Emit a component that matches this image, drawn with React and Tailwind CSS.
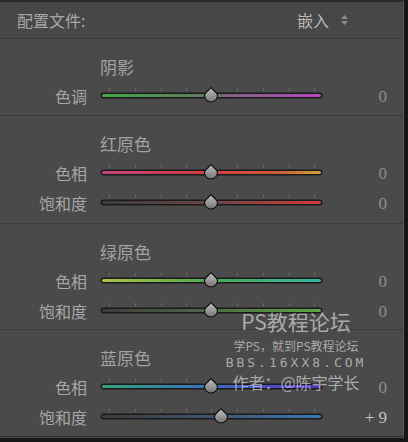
import React from "react";

const CJK = { fontFamily: '"Noto Sans CJK SC", "Noto Sans", sans-serif' };
const SERIF = { fontFamily: '"Liberation Serif", "DejaVu Serif", serif' };

const TICKS = [9, 35, 61, 86, 111, 137, 163, 189, 214];

function Slider({ id, stops, value = 0 }) {
  const cx = 111 + value * 1.11;
  return (
    <svg width="223" height="30" viewBox="0 0 223 30" className="block">
      <defs>
        <linearGradient id={`g-${id}`} x1="0" y1="0" x2="1" y2="0">
          {stops.map(([o, c], i) => (
            <stop key={i} offset={o} stopColor={c} />
          ))}
        </linearGradient>
        <linearGradient id={`t-${id}`} x1="0" y1="0" x2="0" y2="1">
          <stop offset="0" stopColor="#c4c4c4" />
          <stop offset="1" stopColor="#747474" />
        </linearGradient>
      </defs>
      {TICKS.map((x) => (
        <rect key={x} x={x} y="7" width="1" height="3" fill="#6c6c6c" />
      ))}
      <rect x="0.5" y="11.5" width="222" height="6" rx="3" fill="#1b1b1b" />
      <rect x="2" y="13" width="219" height="3" rx="1.5" fill={`url(#g-${id})`} />
      <path
        d={`M${cx},6.5 C${cx + 2},9.5 ${cx + 6.5},11.5 ${cx + 6.5},14.5 A6.5 6.5 0 1 1 ${cx - 6.5},14.5 C${cx - 6.5},11.5 ${cx - 2},9.5 ${cx},6.5 Z`}
        fill={`url(#t-${id})`}
        stroke="#111"
        strokeWidth="1.2"
      />
    </svg>
  );
}

function Row({ label, id, stops, value = 0 }) {
  const text = value > 0 ? `+ ${value}` : `${value}`;
  return (
    <div className="flex h-[30px] shrink-0 items-center">
      <div className="w-[87px] text-right text-[16px] leading-none text-[#a6a6a6]" style={CJK}>
        {label}
      </div>
      <div className="ml-[13px]">
        <Slider id={id} stops={stops} value={value} />
      </div>
      <div
        className={`w-[64px] text-right text-[17px] leading-none ${value ? "text-[#c4c4c4]" : "text-[#8e8e8e]"}`}
        style={SERIF}
      >
        {text}
      </div>
    </div>
  );
}

function Section({ title, children, pb }) {
  return (
    <div className={`shrink-0 border-t border-[#3a3a3a] pt-[18px] ${pb}`}>
      <div className="h-[20px] pl-[100px] text-[17px] leading-[20px] text-[#a2a2a2]" style={CJK}>
        {title}
      </div>
      <div className="mt-[4px]">{children}</div>
    </div>
  );
}

export default function App() {
  return (
    <div className="relative flex h-[442px] w-[408px] flex-col bg-[#161616]">
      <div className="flex h-[437px] w-[404px] shrink-0 flex-col overflow-hidden border-t-2 border-r border-b border-[#2c2c2c] border-r-[#5a5a5a] border-b-[#2a2a2a] bg-[#4a4a4a]">
        {/* profile header */}
        <div className="flex h-[36px] shrink-0 items-center bg-[#474747] pl-[17px] pr-[55px]">
          <span className="flex-1 text-[16px] leading-none text-[#a8a8a8]" style={CJK}>
            配置文件:
          </span>
          <span className="text-[16px] leading-none text-[#b8b8b8]" style={CJK}>
            嵌入
          </span>
          <svg width="7" height="10" viewBox="0 0 7 10" className="ml-[12px]">
            <path d="M3.5 0 L7 4 L0 4 Z" fill="#8a8a8a" />
            <path d="M3.5 10 L7 6 L0 6 Z" fill="#8a8a8a" />
          </svg>
        </div>

        <Section title="阴影" pb="pb-[4px]">
          <Row
            label="色调"
            id="sh"
            stops={[
              [0, "#43a845"],
              [0.45, "#5f7c5f"],
              [0.55, "#7d647d"],
              [1, "#b548c0"],
            ]}
          />
        </Section>

        <Section title="红原色" pb="pb-[5px]">
          <Row
            label="色相"
            id="rh"
            stops={[
              [0, "#c2407e"],
              [0.5, "#d0403e"],
              [0.8, "#d05a3a"],
              [1, "#c8a432"],
            ]}
          />
          <Row
            label="饱和度"
            id="rs"
            stops={[
              [0, "#3c3c3c"],
              [0.5, "#6a4646"],
              [1, "#d43a3a"],
            ]}
          />
        </Section>

        <Section title="绿原色" pb="pb-[3px]">
          <Row
            label="色相"
            id="gh"
            stops={[
              [0, "#b0c444"],
              [0.5, "#4aa850"],
              [1, "#36b4a4"],
            ]}
          />
          <Row
            label="饱和度"
            id="gs"
            stops={[
              [0, "#3c3c3c"],
              [0.5, "#4f6a46"],
              [1, "#5aa840"],
            ]}
          />
        </Section>

        <Section title="蓝原色" pb="pb-[4px]">
          <Row
            label="色相"
            id="bh"
            stops={[
              [0, "#34a47c"],
              [0.5, "#3a6cc0"],
              [1, "#5834c8"],
            ]}
          />
          <Row
            label="饱和度"
            id="bs"
            value={9}
            stops={[
              [0, "#3c3c3c"],
              [0.5, "#3f556c"],
              [1, "#3a78b8"],
            ]}
          />
        </Section>
      </div>
      <div className="h-[1px] w-[404px] bg-[#4c4c4c]" />

      {/* site watermark */}
      <div
        className="pointer-events-none absolute left-[222px] top-[306px] flex w-[148px] flex-col items-center text-[#d8d8d8]/70"
        style={CJK}
      >
        <div className="text-[21px] leading-[31px]">PS教程论坛</div>
        <div className="text-[12px] leading-[18px]">学PS，就到PS教程论坛</div>
        <div className="text-[13px] leading-[16px] tracking-[3px]" style={{ fontFamily: '"DejaVu Sans Mono", monospace' }}>
          BBS.16XX8.COM
        </div>
        <div className="text-[16px] leading-[23px]">作者：@陈宇学长</div>
      </div>
    </div>
  );
}
